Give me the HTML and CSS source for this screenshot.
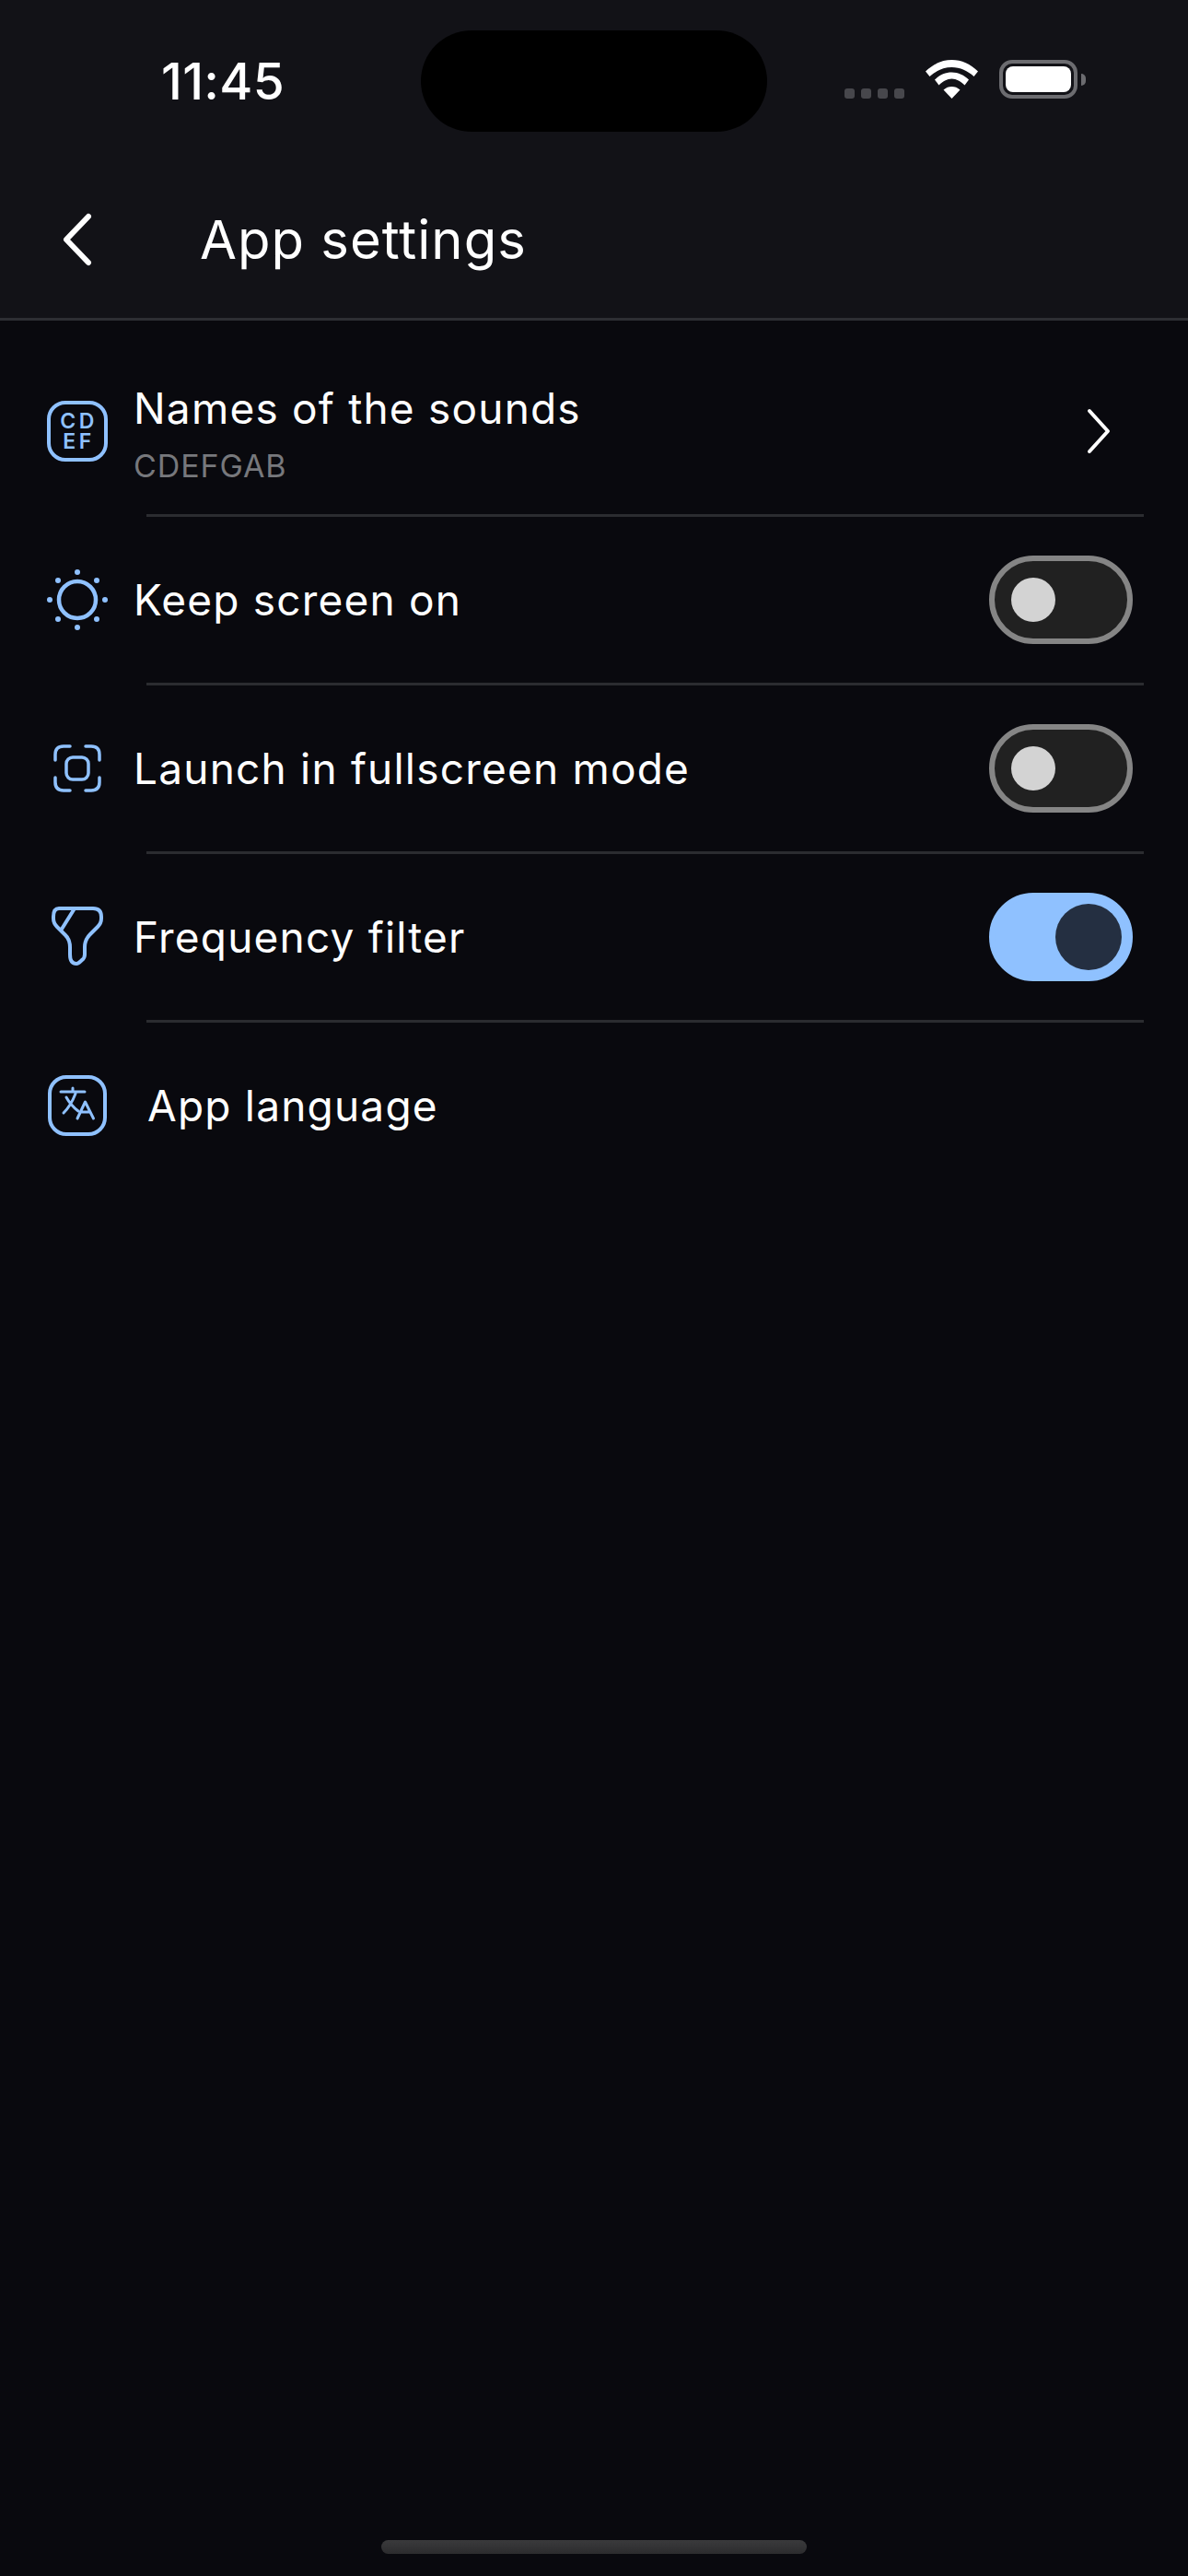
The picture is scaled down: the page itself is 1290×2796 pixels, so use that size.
FILE: index.html
```html
<!DOCTYPE html>
<html lang="en">

<head>
    <meta charset="UTF-8">
    <meta name="viewport" content="width=device-width, initial-scale=1.0">
    <title>App settings</title>
    <link rel="stylesheet" href="styles.css">
</head>

<body>
    <div class="screen">
        <header class="top">
            <div class="status-bar">
                <span class="clock">11:45</span>
                <div class="island"></div>
                <div class="status-icons">
                    <div class="signal"><i></i><i></i><i></i><i></i></div>
                    <svg class="wifi" width="57" height="42" viewBox="0 0 57 42">
                        <path fill="#fff" d="M28.500 0C39 0 49 4.500 57 12.500L52.500 18C46 12 37.500 8 28.500 8S11 12 4.500 18L0 12.500C8 4.500 18 0 28.500 0Z" />
                        <path fill="#fff" d="M28.500 13.500C35.500 13.500 42 16.500 47 21.500L42.500 27.500C38.500 23.500 33.500 20.500 28.500 20.500S18.500 23.500 14.500 27.500L10 21.500C15 16.500 21.500 13.500 28.500 13.500Z" />
                        <path fill="#fff" d="M28.500 29C32 29 34.500 30 37.500 32.500L28.500 42L19.500 32.500C22.500 30 25 29 28.500 29Z" />
                    </svg>
                    <div class="battery">
                        <div class="battery-fill"></div>
                    </div>
                    <div class="battery-tip"></div>
                </div>
            </div>
            <div class="nav-bar">
                <svg class="back" width="34" height="60" viewBox="0 0 34 60">
                    <path d="M29 5 L5 30 L29 55" fill="none" stroke="#fff" stroke-width="6" stroke-linecap="round" stroke-linejoin="round" />
                </svg>
                <h1>App settings</h1>
            </div>
        </header>

        <main class="list">
            <div class="row row-tall">
                <div class="icon icon-sounds">CD<br>EF</div>
                <div class="row-text">
                    <div class="row-title">Names of the sounds</div>
                    <div class="row-sub">CDEFGAB</div>
                </div>
                <svg class="chevron" width="26" height="50" viewBox="0 0 26 50">
                    <path d="M3 3 L23 25 L3 47" fill="none" stroke="#fff" stroke-width="4" stroke-linecap="round" stroke-linejoin="round" />
                </svg>
            </div>

            <div class="row">
                <svg class="icon" width="66" height="66" viewBox="0 0 66 66">
                    <circle cx="33" cy="33" r="20" fill="none" stroke="#8fc1ff" stroke-width="4.500" />
                    <g fill="#8fc1ff">
                        <circle cx="33" cy="3" r="3" />
                        <circle cx="33" cy="63" r="3" />
                        <circle cx="3" cy="33" r="3" />
                        <circle cx="63" cy="33" r="3" />
                        <circle cx="12" cy="12" r="3" />
                        <circle cx="54" cy="12" r="3" />
                        <circle cx="12" cy="54" r="3" />
                        <circle cx="54" cy="54" r="3" />
                    </g>
                </svg>
                <div class="row-title">Keep screen on</div>
                <div class="toggle"><div class="knob"></div></div>
            </div>

            <div class="row">
                <svg class="icon" width="66" height="66" viewBox="0 0 66 66">
                    <g fill="none" stroke="#8fc1ff" stroke-width="3.500" stroke-linecap="round">
                        <path d="M9 24 V18 Q9 9 18 9 H25" />
                        <path d="M42 9 H48 Q57 9 57 18 V24" />
                        <path d="M57 43 V48 Q57 57 48 57 H42" />
                        <path d="M25 57 H18 Q9 57 9 48 V43" />
                        <rect x="21" y="21" width="24" height="24" rx="7" />
                    </g>
                </svg>
                <div class="row-title">Launch in fullscreen mode</div>
                <div class="toggle"><div class="knob"></div></div>
            </div>

            <div class="row">
                <svg class="icon" width="66" height="66" viewBox="0 0 66 66">
                    <path d="M13 2 H50 Q59 2 59 11 V13 Q59 18 55 22 L47 30 Q41 36 41 44 V52 Q41 56 38 58 Q34 62 32 62 Q25 62 25 52 V44 Q25 36 20 31 L11 22 Q7 18 7 13 V11 Q7 2 13 2 Z M30 2 L15 26" fill="none" stroke="#8fc1ff" stroke-width="4" stroke-linejoin="round" />
                </svg>
                <div class="row-title">Frequency filter</div>
                <div class="toggle toggle-on"><div class="knob"></div></div>
            </div>

            <div class="row row-last">
                <svg class="icon" width="66" height="66" viewBox="0 0 66 66">
                    <rect x="3" y="2" width="60" height="62" rx="18" fill="none" stroke="#8fc1ff" stroke-width="4" />
                    <g fill="none" stroke="#8fc1ff" stroke-width="3" stroke-linecap="round" stroke-linejoin="round">
                        <path d="M15 18 H41 M28 14 V18 M31 20 Q26 33 18 41 M21 24 Q26 33 34 39" />
                        <path d="M33 47 L41.500 29 L50.500 47 M36 40 H47" />
                    </g>
                </svg>
                <div class="row-title row-title-wide">App language</div>
            </div>
        </main>

        <div class="home-bar"></div>
    </div>
</body>

</html>
```

FILE: styles.css
```css
/* Page */
html,
body {
    margin: 0;
    padding: 0;
}

body {
    background-color: #09090e;
    color: #fff;
    font-family: 'Inter', sans-serif;
}

.screen {
    width: 1290px;
    height: 2796px;
    display: flex;
    flex-direction: column;
    overflow: hidden;
}

/* Header */
.top {
    height: 348px;
    box-sizing: border-box;
    background-color: #121217;
    border-bottom: 3px solid #2d2e33;
}

.status-bar {
    height: 175px;
    box-sizing: border-box;
    padding-top: 33px;
    display: flex;
    align-items: flex-start;
}

.clock {
    width: 309px;
    margin-right: 148px;
    padding-top: 23px;
    text-align: right;
    font-size: 55px;
    line-height: 64px;
    font-weight: 500;
    letter-spacing: 0.300px;
}

.island {
    width: 376px;
    height: 110px;
    border-radius: 55px;
    background-color: #000;
}

.status-icons {
    display: flex;
    align-items: flex-end;
    height: 42px;
    margin-top: 32px;
    margin-left: 84px;
}

.signal {
    display: flex;
    gap: 7px;
    margin-right: 23px;
}

.signal i {
    width: 11px;
    height: 11px;
    border-radius: 3px;
    background-color: #47474c;
}

.battery {
    width: 85px;
    height: 42px;
    box-sizing: border-box;
    margin-left: 23px;
    padding: 3px;
    border: 4px solid #6c6c70;
    border-radius: 14px;
}

.battery-fill {
    height: 100%;
    border-radius: 8px;
    background-color: #fff;
}

.battery-tip {
    width: 5px;
    height: 13px;
    margin-left: 4px;
    margin-bottom: 14px;
    border-radius: 0 7px 7px 0;
    background-color: #6c6c70;
}

.nav-bar {
    display: flex;
    align-items: center;
    height: 170px;
    padding-left: 67px;
}

.back {
    flex-shrink: 0;
}

.nav-bar h1 {
    margin: 0 0 0 116px;
    font-size: 58px;
    font-weight: 400;
    letter-spacing: 1px;
}

/* Settings list */
.list {
    flex: 1;
    display: flex;
    flex-direction: column;
    padding-left: 51px;
}

.row {
    position: relative;
    display: flex;
    align-items: center;
    height: 183px;
    box-sizing: border-box;
    padding-right: 60px;
    padding-bottom: 3px;
}

.row-tall {
    height: 213px;
    padding-top: 30px;
}

/* divider starts after the icon column */
.row::after {
    content: "";
    position: absolute;
    left: 108px;
    right: 48px;
    bottom: 0;
    height: 3px;
    background-color: #2b2c30;
}

.row-last::after {
    display: none;
}

.icon {
    flex-shrink: 0;
    width: 66px;
    height: 66px;
}

.icon-sounds {
    box-sizing: border-box;
    padding-top: 7px;
    padding-left: 3px;
    border: 4px solid #8fc1ff;
    border-radius: 20px;
    text-align: center;
    color: #8fc1ff;
    font-size: 23px;
    line-height: 22px;
    font-weight: 600;
    letter-spacing: 3.500px;
}

.row-text {
    flex: 1;
    margin-top: 6px;
}

.row-title {
    flex: 1;
    margin-left: 28px;
    font-size: 46px;
    line-height: 56px;
    letter-spacing: 1.200px;
}

.row-title-wide {
    margin-left: 43px;
}

.row-sub {
    margin-left: 28px;
    margin-top: 13px;
    color: #77787c;
    font-size: 34px;
    line-height: 44px;
    letter-spacing: 0.900px;
}

.chevron {
    margin-right: 24px;
}

/* Toggles */
.toggle {
    display: flex;
    align-items: center;
    width: 156px;
    height: 96px;
    box-sizing: border-box;
    padding-left: 18px;
    border: 6px solid #858585;
    border-radius: 48px;
    background-color: #212121;
}

.knob {
    width: 48px;
    height: 48px;
    border-radius: 50%;
    background-color: #d3d3d3;
}

.toggle-on {
    justify-content: flex-end;
    padding-left: 0;
    padding-right: 6px;
    border-color: #8fc1ff;
    background-color: #8fc1ff;
}

.toggle-on .knob {
    width: 72px;
    height: 72px;
    background-color: #242f41;
}

.home-bar {
    flex-shrink: 0;
    width: 462px;
    height: 15px;
    margin: 0 auto 24px;
    border-radius: 8px;
    background-image: linear-gradient(#3a3a3c, #2c2c2e);
}
```
